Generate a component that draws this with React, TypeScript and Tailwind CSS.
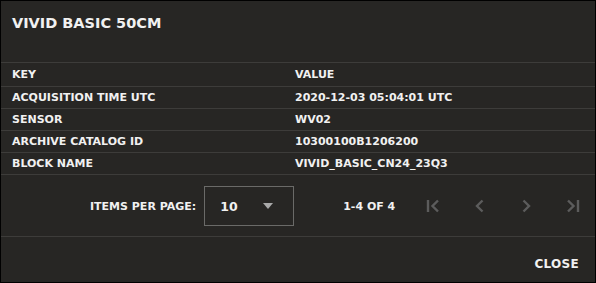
const rows = [
  { key: "ACQUISITION TIME UTC", value: "2020-12-03 05:04:01 UTC" },
  { key: "SENSOR", value: "WV02" },
  { key: "ARCHIVE CATALOG ID", value: "10300100B1206200" },
  { key: "BLOCK NAME", value: "VIVID_BASIC_CN24_23Q3" },
];

function PageIcon({ kind }: { kind: "first" | "prev" | "next" | "last" }) {
  return (
    <svg width="16" height="14" viewBox="0 0 16 14" fill="none" stroke="#5c5c5c" strokeWidth="2.4" strokeLinecap="butt" strokeLinejoin="miter">
      {kind === "first" && (
        <>
          <path d="M2 1v12" />
          <path d="M12 1.5L6.5 7l5.5 5.5" />
        </>
      )}
      {kind === "prev" && <path d="M10.5 1.5L5 7l5.5 5.5" />}
      {kind === "next" && <path d="M5.5 1.5L11 7l-5.5 5.5" />}
      {kind === "last" && (
        <>
          <path d="M4 1.5L9.5 7 4 12.5" />
          <path d="M14 1v12" />
        </>
      )}
    </svg>
  );
}

export default function App() {
  return (
    <div
      className="w-[596px] h-[283px] bg-[#272624] border border-black text-[#f1f1f1] flex flex-col"
      style={{ fontFamily: '"DejaVu Sans", sans-serif' }}
    >
      {/* Header */}
      <div className="h-[62px] shrink-0 border-b border-[#3d3c3a] pl-[11px] pt-[13px]">
        <h1 className="text-[14.5px] font-bold leading-[18px]">VIVID BASIC 50CM</h1>
      </div>

      {/* Table */}
      <div className="text-[11px] font-bold shrink-0">
        <div className="grid grid-cols-[283px_1fr] h-[24px] items-center pl-[11px] pt-[1px] border-b border-[#3d3c3a]">
          <span>KEY</span>
          <span>VALUE</span>
        </div>
        {rows.map((r) => (
          <div key={r.key} className="grid grid-cols-[283px_1fr] h-[22px] items-center pl-[11px] pt-[1px] border-b border-[#3d3c3a]">
            <span>{r.key}</span>
            <span>{r.value}</span>
          </div>
        ))}
      </div>

      {/* Pagination */}
      <div className="h-[62px] shrink-0 border-b border-[#3d3c3a] flex items-center text-[11px] font-bold">
        <span className="ml-[89px] pt-[3px]">ITEMS PER PAGE:</span>
        <div className="ml-[8px] mt-[1px] w-[90px] h-[40px] border border-[#6a6a68] flex items-center pl-[15px] pr-[20px] justify-between">
          <span className="text-[12.5px] pt-[2px]">10</span>
          <svg width="10" height="6" viewBox="0 0 10 6">
            <path d="M0 0h10L5 6z" fill="#a9a9a9" />
          </svg>
        </div>
        <span className="ml-[49px] pt-[3px]">1-4 OF 4</span>
        <div className="ml-auto flex pt-[1px]">
          {(["first", "prev", "next", "last"] as const).map((k) => (
            <button key={k} className="w-[46px] h-[40px] flex items-center justify-center">
              <PageIcon kind={k} />
            </button>
          ))}
        </div>
      </div>

      {/* Footer */}
      <div className="flex-1 flex items-center justify-end pr-[16px] pt-[8px]">
        <button className="text-[12px] font-bold tracking-[0.3px]">CLOSE</button>
      </div>
    </div>
  );
}
